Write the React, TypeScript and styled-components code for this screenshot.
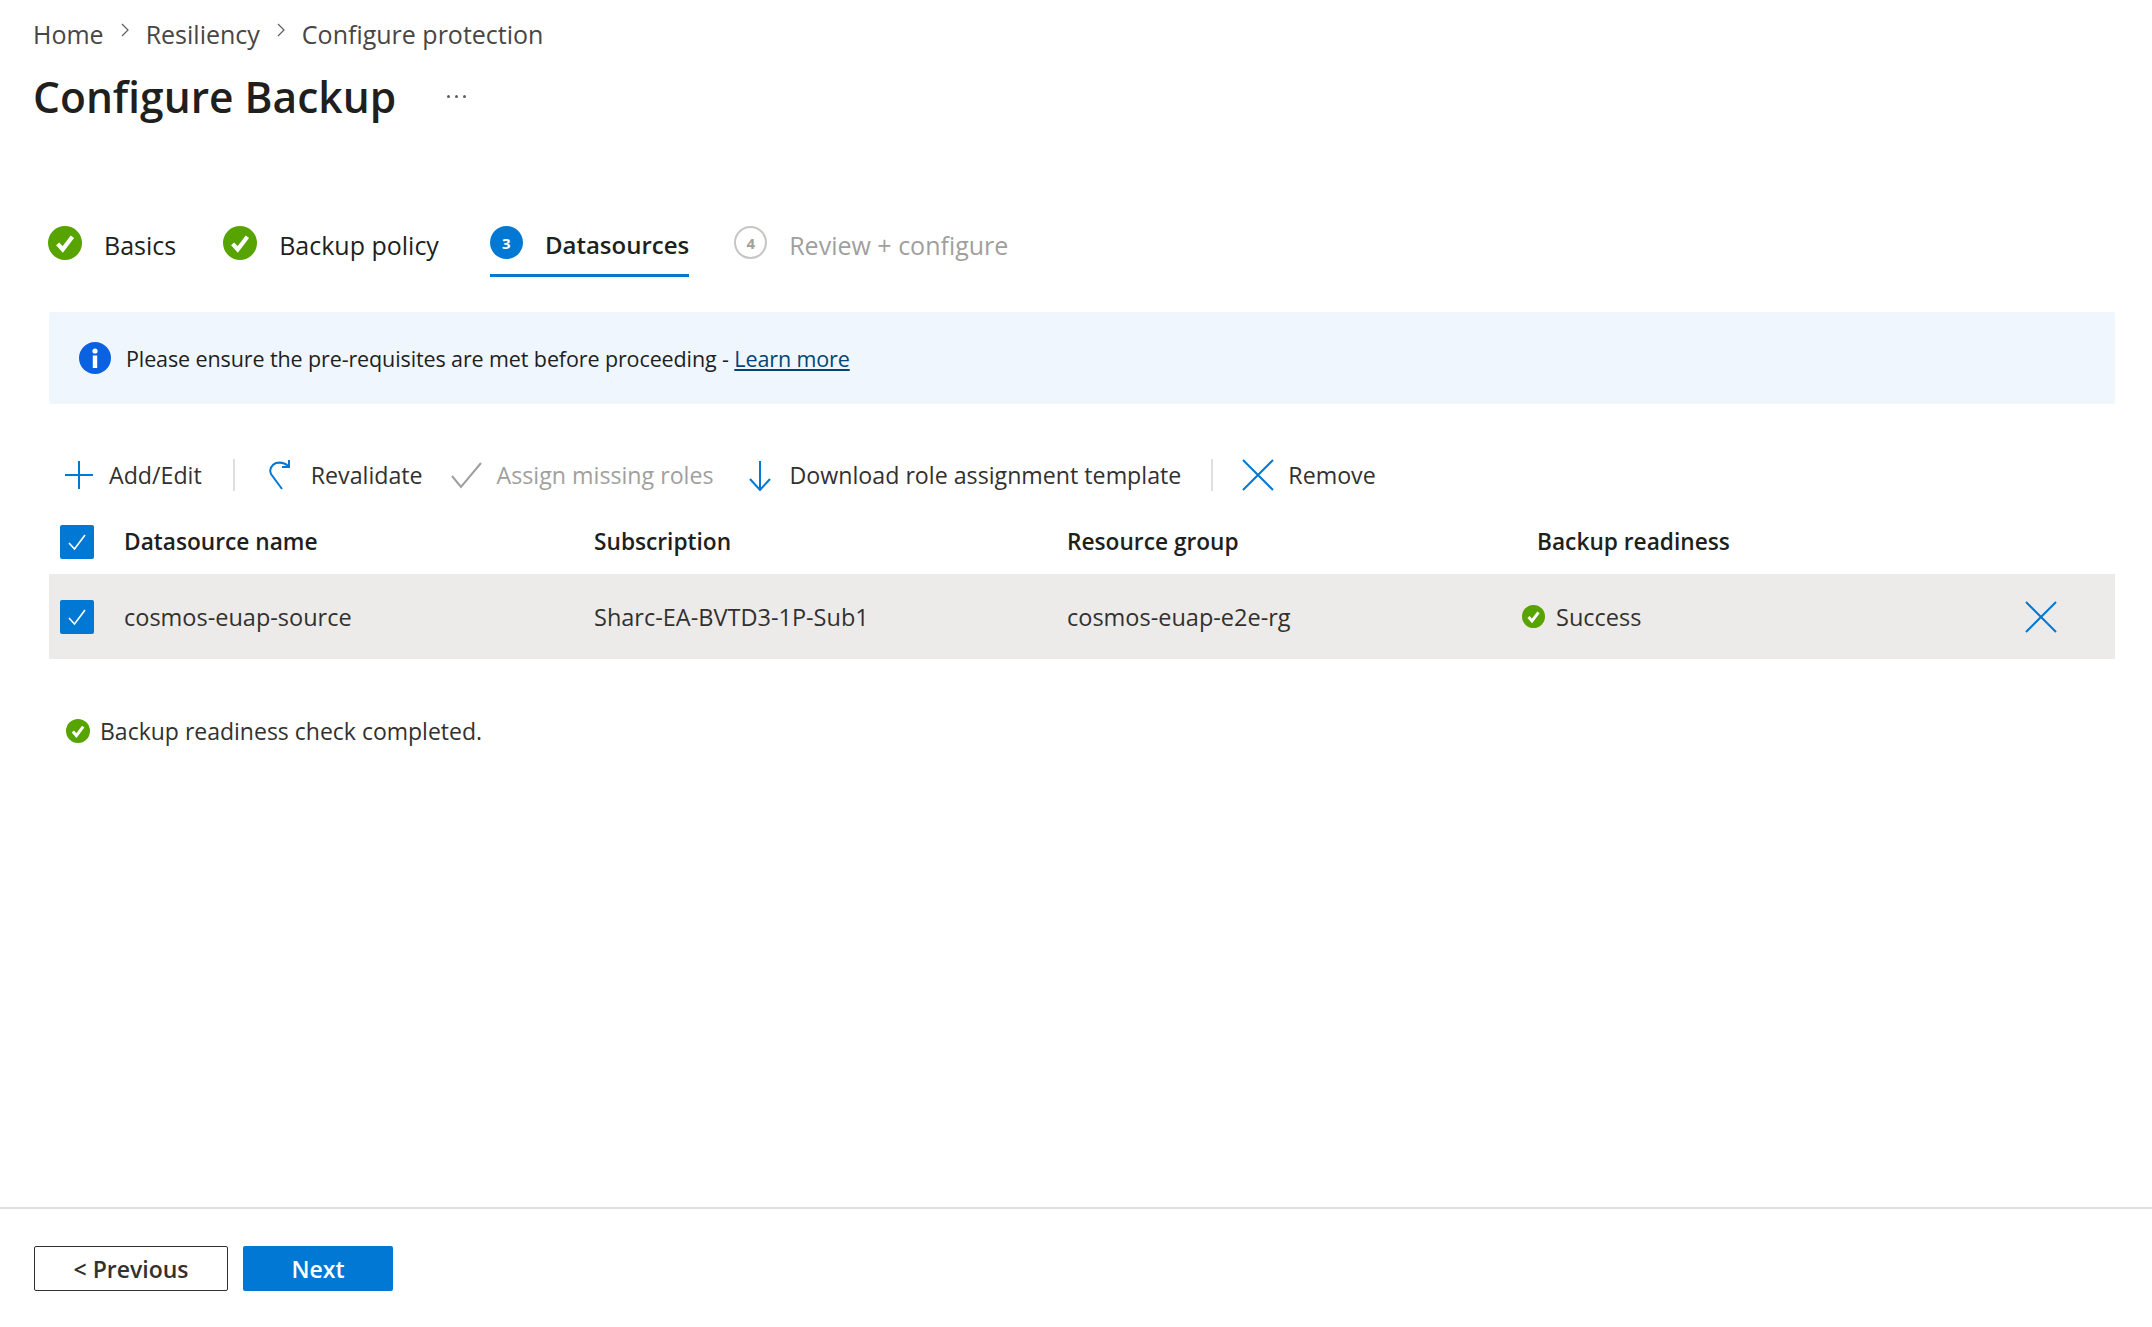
import React from 'react';
import styled, { createGlobalStyle } from 'styled-components';

const GlobalStyle = createGlobalStyle`
  html, body {
    margin: 0;
    padding: 0;
    background: #fff;
    font-family: "Open Sans", "Noto Sans", sans-serif;
    color: #323130;
  }
`;

const Page = styled.div`
  width: 2152px;
  height: 1327px;
  display: flex;
  flex-direction: column;
  overflow: hidden;
`;

const Main = styled.div`
  flex: 1;
  padding: 17px 37px 0 33px;
`;

const Breadcrumb = styled.nav`
  display: flex;
  align-items: center;
  height: 34px;
  font-size: 25px;
  color: #484644;
`;

const Crumb = styled.span``;

const CrumbSep = styled.svg`
  width: 10px;
  height: 14px;
  margin: -8px 16px 0 16px;
  fill: none;
  stroke: #605e5c;
  stroke-width: 1.2;
`;

const TitleRow = styled.div`
  display: flex;
  align-items: center;
  height: 60px;
  margin-top: 15px;
`;

const Title = styled.h1`
  margin: 0;
  font-size: 42.5px;
  font-weight: 600;
  color: #201f1e;
`;

const More = styled.span`
  margin-left: 51px;
  display: flex;
  gap: 5px;
`;

const Dot = styled.i`
  width: 3px;
  height: 3px;
  border-radius: 50%;
  background: #605e5c;
`;

const Steps = styled.div`
  display: flex;
  margin: 100px 0 0 15px;
  height: 51px;
`;

const Step = styled.div<{ $active?: boolean; $gap: number }>`
  display: flex;
  align-items: flex-start;
  gap: 22px;
  height: 51px;
  margin-right: ${p => p.$gap}px;
  border-bottom: 3px solid ${p => (p.$active ? '#0078d4' : 'transparent')};
  box-sizing: border-box;
`;

const StepLabel = styled.span<{ $active?: boolean; $muted?: boolean }>`
  font-size: ${p => (p.$active ? 24 : 25)}px;
  line-height: 34px;
  margin-top: 2px;
  font-weight: ${p => (p.$active ? 600 : 400)};
  color: ${p => (p.$muted ? '#a19f9d' : '#201f1e')};
`;

const StepNumber = styled.span<{ $muted?: boolean }>`
  width: 33px;
  height: 33px;
  border-radius: 50%;
  box-sizing: border-box;
  display: flex;
  align-items: center;
  justify-content: center;
  font-size: 15px;
  font-weight: 700;
  background: ${p => (p.$muted ? '#fff' : '#0078d4')};
  color: ${p => (p.$muted ? '#a19f9d' : '#fff')};
  border: ${p => (p.$muted ? '2px solid #c8c6c4' : 'none')};
`;

const Banner = styled.div`
  display: flex;
  align-items: center;
  gap: 15px;
  height: 92px;
  margin: 35px 0 0 16px;
  padding-left: 30px;
  background: #eff6fe;
  border-radius: 2px;
  font-size: 21.5px;
  letter-spacing: -0.11px;
  color: #201f1e;
`;

const Link = styled.a`
  color: #004578;
  text-decoration: underline;
`;

const Toolbar = styled.div`
  display: flex;
  align-items: center;
  height: 44px;
  margin: 49px 0 0 30px;
`;

const ToolButton = styled.div<{ $disabled?: boolean; $after: number }>`
  display: flex;
  align-items: center;
  gap: 14px;
  font-size: 23.2px;
  margin-right: ${p => p.$after}px;
  color: ${p => (p.$disabled ? '#a19f9d' : '#323130')};
`;

const ToolDivider = styled.span<{ $after: number }>`
  width: 2px;
  height: 32px;
  background: #e1dfdd;
  margin-right: ${p => p.$after}px;
`;

const Icon = styled.svg<{ $color?: string }>`
  width: 32px;
  height: 32px;
  flex: none;
  fill: none;
  stroke: ${p => p.$color || '#0078d4'};
  stroke-width: 2;
`;

const TableHead = styled.div`
  display: grid;
  grid-template-columns: 75px 470px 473px 470px 1fr;
  align-items: center;
  height: 65px;
  margin: 12px 0 0 16px;
  font-size: 22.7px;
  font-weight: 600;
  color: #201f1e;
`;

const TableRow = styled.div`
  display: grid;
  grid-template-columns: 75px 470px 473px 455px 1fr auto;
  align-items: center;
  height: 85px;
  margin-left: 16px;
  padding-right: 58px;
  background: #edebe9;
  font-size: 23.5px;
  color: #323130;
`;

const Check = styled.span`
  width: 34px;
  height: 34px;
  margin-left: 11px;
  border-radius: 2px;
  background: #0078d4;
  display: flex;
  align-items: center;
  justify-content: center;
`;

const Readiness = styled.span`
  display: flex;
  align-items: center;
  gap: 11px;
`;

const Status = styled.div`
  display: flex;
  align-items: center;
  gap: 10px;
  margin: 55px 0 0 33px;
  height: 34px;
  font-size: 23px;
  color: #323130;
`;

const Footer = styled.div`
  border-top: 2px solid #e1dfdd;
  height: 120px;
  box-sizing: border-box;
  display: flex;
  gap: 15px;
  padding: 37px 0 0 34px;
  align-items: flex-start;
`;

const Button = styled.button<{ $primary?: boolean; $w: number }>`
  width: ${p => p.$w}px;
  height: 45px;
  border-radius: 2px;
  box-sizing: border-box;
  font-family: inherit;
  font-size: 23px;
  font-weight: 600;
  padding: 0;
  background: ${p => (p.$primary ? '#0078d4' : '#fff')};
  color: ${p => (p.$primary ? '#fff' : '#323130')};
  border: ${p => (p.$primary ? 'none' : '1px solid #323130')};
`;

const SuccessIcon = ({ size }: { size: number }) => (
  <svg width={size} height={size} viewBox="0 0 24 24" style={{ flex: 'none' }}>
    <circle cx="12" cy="12" r="12" fill="#57a300" />
    <path d="M6.8 12.6l3.6 4 6.8-9" fill="none" stroke="#fff" strokeWidth="3" />
  </svg>
);

const Sep = () => (
  <CrumbSep viewBox="0 0 10 14">
    <path d="M2 1l6 6-6 6" />
  </CrumbSep>
);

const CheckMark = () => (
  <svg width="22" height="22" viewBox="0 0 22 22" fill="none" stroke="#fff" strokeWidth="1.6">
    <path d="M3 12l5.5 6L19 4" />
  </svg>
);

const Close = () => (
  <Icon viewBox="0 0 32 32">
    <path d="M1 1l30 30M31 1L1 31" />
  </Icon>
);

export default function App() {
  return (
    <Page>
      <GlobalStyle />
      <Main>
        <Breadcrumb>
          <Crumb>Home</Crumb>
          <Sep />
          <Crumb>Resiliency</Crumb>
          <Sep />
          <Crumb>Configure protection</Crumb>
        </Breadcrumb>
        <TitleRow>
          <Title>Configure Backup</Title>
          <More>
            <Dot />
            <Dot />
            <Dot />
          </More>
        </TitleRow>
        <Steps>
          <Step $gap={47}>
            <SuccessIcon size={34} />
            <StepLabel>Basics</StepLabel>
          </Step>
          <Step $gap={51}>
            <SuccessIcon size={34} />
            <StepLabel>Backup policy</StepLabel>
          </Step>
          <Step $active $gap={45}>
            <StepNumber>3</StepNumber>
            <StepLabel $active>Datasources</StepLabel>
          </Step>
          <Step $gap={0}>
            <StepNumber $muted>4</StepNumber>
            <StepLabel $muted>Review + configure</StepLabel>
          </Step>
        </Steps>
        <Banner>
          <svg width="32" height="32" viewBox="0 0 32 32" style={{ flex: 'none' }}>
            <circle cx="16" cy="16" r="16" fill="#0b62e0" />
            <circle cx="16" cy="9" r="2.6" fill="#fff" />
            <rect x="13.8" y="13.5" width="4.4" height="12.5" fill="#fff" />
          </svg>
          <span>
            Please ensure the pre-requisites are met before proceeding - <Link>Learn more</Link>
          </span>
        </Banner>
        <Toolbar>
          <ToolButton $after={31}>
            <Icon viewBox="0 0 32 32">
              <path d="M16 2v28M2 16h28" />
            </Icon>
            Add/Edit
          </ToolButton>
          <ToolDivider $after={30} />
          <ToolButton $after={28}>
            <Icon viewBox="0 0 32 32">
              <path d="M17 30L6 15c-2-4 0-9 5-11 5-1 9 0 12 3M24 1v7h-7" />
            </Icon>
            Revalidate
          </ToolButton>
          <ToolButton $disabled $after={30}>
            <Icon viewBox="0 0 32 32" $color="#a19f9d">
              <path d="M1 17l9 11L30 4" />
            </Icon>
            Assign missing roles
          </ToolButton>
          <ToolButton $after={30}>
            <Icon viewBox="0 0 32 32">
              <path d="M16 2v28M6 20l10 11 10-11" />
            </Icon>
            Download role assignment template
          </ToolButton>
          <ToolDivider $after={29} />
          <ToolButton $after={0}>
            <Close />
            Remove
          </ToolButton>
        </Toolbar>
        <TableHead>
          <Check>
            <CheckMark />
          </Check>
          <span>Datasource name</span>
          <span>Subscription</span>
          <span>Resource group</span>
          <span>Backup readiness</span>
        </TableHead>
        <TableRow>
          <Check>
            <CheckMark />
          </Check>
          <span>cosmos-euap-source</span>
          <span>Sharc-EA-BVTD3-1P-Sub1</span>
          <span>cosmos-euap-e2e-rg</span>
          <Readiness>
            <SuccessIcon size={23} />
            Success
          </Readiness>
          <Close />
        </TableRow>
        <Status>
          <SuccessIcon size={24} />
          Backup readiness check completed.
        </Status>
      </Main>
      <Footer>
        <Button $w={194}>&lt; Previous</Button>
        <Button $primary $w={150}>
          Next
        </Button>
      </Footer>
    </Page>
  );
}
